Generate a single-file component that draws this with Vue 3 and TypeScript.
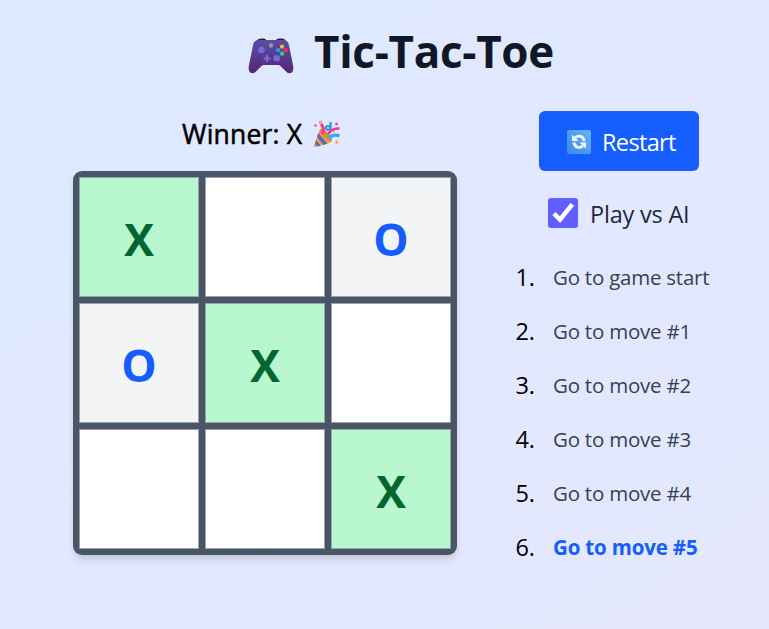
<script setup lang="ts">
import { computed, ref } from 'vue'

type Mark = 'X' | 'O' | null

const lines = [
  [0, 1, 2], [3, 4, 5], [6, 7, 8],
  [0, 3, 6], [1, 4, 7], [2, 5, 8],
  [0, 4, 8], [2, 4, 6],
]
const initialMoves = [0, 2, 4, 3, 8]
const moves = ref<number[]>([...initialMoves])
const step = ref(initialMoves.length)
const vsAi = ref(true)

const squares = computed<Mark[]>(() => {
  const board: Mark[] = Array(9).fill(null)
  moves.value.slice(0, step.value).forEach((cell, i) => {
    board[cell] = i % 2 === 0 ? 'X' : 'O'
  })
  return board
})
const winningLine = computed(() =>
  lines.find(([a, b, c]) => {
    const s = squares.value
    return s[a] && s[a] === s[b] && s[a] === s[c]
  }) ?? [])
const winner = computed(() => winningLine.value.length ? squares.value[winningLine.value[0]] : null)
const nextMark = computed(() => step.value % 2 === 0 ? 'X' : 'O')

function place(cell: number) {
  if (winner.value || squares.value[cell]) return
  moves.value = [...moves.value.slice(0, step.value), cell]
  step.value++
  if (vsAi.value && !winner.value) {
    const free = squares.value.findIndex((s) => !s)
    if (free >= 0) {
      moves.value.push(free)
      step.value++
    }
  }
}
function restart() {
  moves.value = []
  step.value = 0
}
</script>

<template>
  <main class="page">
    <h1 class="title">
      <svg class="pad" viewBox="0 0 46 36" aria-hidden="true">
        <defs>
          <linearGradient id="padBody" x1="0" y1="0" x2="0" y2="1">
            <stop offset="0" stop-color="#5b4fa0" />
            <stop offset=".55" stop-color="#54398f" />
            <stop offset="1" stop-color="#5c2476" />
          </linearGradient>
        </defs>
        <path d="M8 4C9 1 11 .5 14 .5S18 1 18.500 3ZM27.500 3C28 .8 30 .5 33 .5S37 1 38 4Z" fill="#45143f" />
        <path d="M11 2H35Q39.500 2 40.700 6L45 27Q46.300 34 42.500 35Q40 35.800 37.500 33L32.500 28Q31.500 27 30 27H16Q14.500 27 13.500 28L8.500 33Q6 35.800 3.500 35Q-.3 34 1 27L5.300 6Q6.500 2 11 2Z" fill="url(#padBody)" />
        <circle cx="13.500" cy="12" r="3.300" fill="#736bd6" />
        <circle cx="28.700" cy="20.300" r="3.300" fill="#736bd6" />
        <path d="M19 17V24M15.500 20.500H22.500" stroke="#7770de" stroke-width="2" />
        <circle cx="23" cy="7.500" r="2.200" fill="#9a91a8" />
        <circle cx="34" cy="8.700" r="2.100" fill="#ffb442" />
        <circle cx="30.200" cy="12.200" r="2.100" fill="#219bf0" />
        <circle cx="37.700" cy="12.200" r="2.100" fill="#fa2a55" />
        <circle cx="34" cy="15.700" r="2.100" fill="#20d982" />
      </svg>
      <span>Tic-Tac-Toe</span>
    </h1>

    <div class="game">
      <section class="left">
        <div class="status">
          <template v-if="winner">
            <span>Winner: {{ winner }}</span>
            <svg class="party" viewBox="0 0 28 28" aria-hidden="true">
              <path d="M7 9L19 21Q16 24 1.500 27Q.5 27 1 25.500Z" fill="#f5a338" />
              <path d="M5.300 13L14.500 23.500L10.500 25L4 17ZM3 20L7.800 25.800L4.300 26.500L2 23.800Z" fill="#5f69c4" />
              <ellipse cx="13" cy="15" rx="3" ry="8.200" transform="rotate(-45 13 15)" fill="#d98a40" />
              <path d="M8 4Q12 8 9.500 14" fill="none" stroke="#fa3295" stroke-width="3" />
              <path d="M17.500 2V9Q13 11 12.800 7.500Q14 4.500 17.500 7.500" fill="none" stroke="#2998dc" stroke-width="2.200" />
              <path d="M15.500 14Q18 8 26.500 8.500" fill="none" stroke="#f43694" stroke-width="2.600" />
              <path d="M15.500 18.500Q20 13.500 26.500 16" fill="none" stroke="#3ca9ee" stroke-width="3.200" />
              <path d="M6 .8H9V3.500H6ZM22.500 20.500H25V23.500H22.500Z" fill="#f6a640" />
              <circle cx="2.500" cy="5.500" r="1.300" fill="#d957bd" />
              <circle cx="23.500" cy="4" r="1.500" fill="#e44eac" />
              <circle cx="21" cy="11.500" r="1.100" fill="#f4a048" />
            </svg>
          </template>
          <span v-else>Next player: {{ nextMark }}</span>
        </div>
        <div class="board">
          <button
            v-for="(mark, i) in squares"
            :key="i"
            class="cell"
            :class="{ filled: mark, o: mark === 'O', win: winningLine.includes(i) }"
            @click="place(i)"
          >{{ mark }}</button>
        </div>
      </section>

      <aside class="side">
        <button class="restart" @click="restart">
          <svg class="refresh" viewBox="0 0 24 24" aria-hidden="true">
            <defs>
              <linearGradient id="tile" x1="0" y1="1" x2="1" y2="0">
                <stop offset="0" stop-color="#368be2" />
                <stop offset="1" stop-color="#62b6fb" />
              </linearGradient>
            </defs>
            <rect width="24" height="24" rx="2" fill="url(#tile)" />
            <path d="M8 7.500Q15 3.500 17.300 11M16 16Q9 20 6.700 12.500" fill="none" stroke="#f5f3ff" stroke-width="2.800" />
            <path d="M5 4.800V11H11.500ZM19 18.700V12.500H12.500Z" fill="#f5f3ff" />
          </svg>
          <span class="restart-text">Restart</span>
        </button>
        <label class="ai">
          <input v-model="vsAi" class="check-input" type="checkbox">
          <span class="check" :class="{ on: vsAi }">
            <svg v-if="vsAi" viewBox="0 0 30 30"><path d="M6 15.500L12 21.700L24.300 6.300" fill="none" stroke="#fff" stroke-width="4.500" /></svg>
          </span>
          <span class="ai-text">Play vs AI</span>
        </label>
        <ol class="history">
          <li v-for="n in moves.length + 1" :key="n">
            <span class="num">{{ n }}.</span>
            <button class="jump" :class="{ current: step === n - 1 }" @click="step = n - 1">
              {{ n === 1 ? 'Go to game start' : `Go to move #${n - 1}` }}
            </button>
          </li>
        </ol>
      </aside>
    </div>
  </main>
</template>

<style>
body {
  margin: 0;
}
</style>

<style scoped>
.page {
  box-sizing: border-box;
  min-height: 100vh;
  padding-top: 21px;
  background: linear-gradient(to bottom right, #dbeafe, #dfe9ff 25%, #e2e8ff 55%, #e5e8fd);
  color: #000;
  font-family: "Open Sans", "Noto Sans", sans-serif;
  font-size: 23.500px;
}
button {
  border: 0;
  padding: 0;
  background: none;
  font: inherit;
  cursor: pointer;
}
.title {
  display: flex;
  align-items: center;
  height: 60px;
  margin: 0 0 30px 248px;
  gap: 20px;
  color: #101828;
  font-size: 44px;
  font-weight: 700;
  letter-spacing: -.3px;
  line-height: 60px;
  white-space: nowrap;
}
.pad {
  width: 46px;
  height: 36px;
  margin-top: 9px;
}
.game {
  display: flex;
  gap: 56px;
  margin-left: 73px;
}
.left {
  width: 384px;
}
.status {
  display: flex;
  align-items: center;
  box-sizing: border-box;
  height: 44px;
  margin-bottom: 16px;
  padding: 1px 0 0 109px;
  gap: 11px;
  font-size: 26.500px;
  letter-spacing: .2px;
  -webkit-text-stroke: .5px currentColor;
  white-space: nowrap;
}
.party {
  width: 28px;
  height: 28px;
  -webkit-text-stroke: 0;
}
.board {
  display: grid;
  grid-template-columns: repeat(3, 120px);
  grid-auto-rows: 120px;
  gap: 6px;
  padding: 6px;
  border-radius: 9px;
  background: #4a5565;
  box-shadow: 0 6px 9px -1.500px rgb(0 0 0 / 10%), 0 3px 6px -3px rgb(0 0 0 / 10%);
}
.cell {
  padding-top: 4px;
  border: 1px solid #99a1af;
  background: #fff;
  color: #016630;
  font-size: 44.500px;
  font-weight: 700;
  line-height: 60px;
}
.cell.filled {
  background: #f3f4f6;
}
.cell.o {
  color: #155dfc;
}
.cell.win {
  background: #b9f8cf;
}
.side {
  display: flex;
  flex-direction: column;
  width: 212px;
}
.restart {
  display: flex;
  align-items: center;
  width: 160px;
  height: 60px;
  margin-left: 26px;
  padding-left: 28px;
  gap: 11px;
  border-radius: 6px;
  background: #155dfc;
  color: #fff;
}
.restart-text {
  padding-top: 2px;
  letter-spacing: -.65px;
}
.refresh {
  width: 24px;
  height: 24px;
  margin-top: 2px;
}
.ai {
  display: flex;
  align-items: center;
  height: 36px;
  margin: 24px 0 0 35px;
  gap: 12px;
  color: #1e2939;
  white-space: nowrap;
}
.ai-text {
  padding-top: 2px;
  letter-spacing: -.2px;
}
.check-input {
  position: absolute;
  opacity: 0;
}
.check {
  display: flex;
  width: 30px;
  height: 30px;
  border-radius: 3px;
  background: #fff;
}
.check.on {
  background: #615fff;
}
.history {
  display: grid;
  grid-auto-rows: 36px;
  gap: 18px;
  margin: 28px 0 0;
  padding: 0;
  list-style: none;
}
.history li {
  display: flex;
  align-items: center;
}
.num {
  width: 22px;
  text-align: right;
}
.jump {
  margin-left: 18px;
  color: #364153;
  font-size: 20.500px;
  letter-spacing: -.23px;
  white-space: nowrap;
}
.jump.current {
  color: #155dfc;
  font-weight: 700;
  letter-spacing: -.17px;
}
</style>
